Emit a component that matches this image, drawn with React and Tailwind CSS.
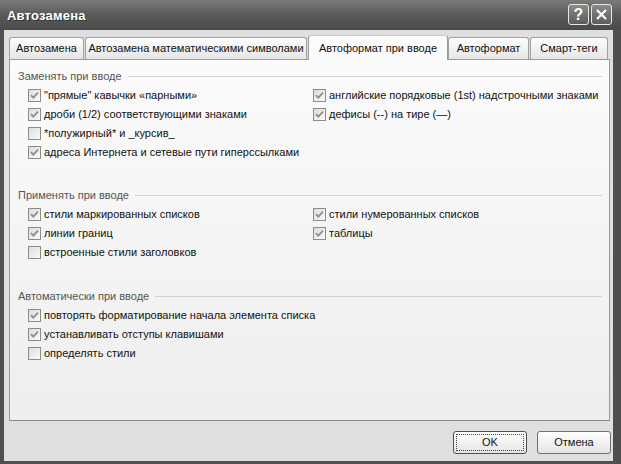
import React from 'react'

const groups = [
  {
    title: 'Заменять при вводе',
    gap: '',
    items: [
      ['"прямые" кавычки «парными»', true],
      ['английские порядковые (1st) надстрочными знаками', true],
      ['дроби (1/2) соответствующими знаками', true],
      ['дефисы (--) на тире (—)', true],
      ['*полужирный* и _курсив_', false],
      null,
      ['адреса Интернета и сетевые пути гиперссылками', true],
    ],
  },
  {
    title: 'Применять при вводе',
    gap: 'mt-[24px]',
    items: [
      ['стили маркированных списков', true],
      ['стили нумерованных списков', true],
      ['линии границ', true],
      ['таблицы', true],
      ['встроенные стили заголовков', false],
    ],
  },
  {
    title: 'Автоматически при вводе',
    gap: 'mt-[25px]',
    items: [
      ['повторять форматирование начала элемента списка', true],
      null,
      ['устанавливать отступы клавишами', true],
      null,
      ['определять стили', false],
    ],
  },
]

function Checkbox({ checked }) {
  return (
    <span className="w-[13px] h-[13px] shrink-0 border border-[#8c8c8c] bg-gradient-to-br from-[#dcdcdc] to-[#fbfbfb] flex items-center justify-center">
      {checked && (
        <svg width="9" height="9" viewBox="0 0 9 9">
          <path d="M1 4.2 L3.3 6.6 L8 1.6" fill="none" stroke="#8e8e8e" strokeWidth="1.8" />
        </svg>
      )}
    </span>
  )
}

function Group({ title, items, gap }) {
  return (
    <div className={gap}>
      <div className="h-[19px] flex items-center pl-[8px] pr-[7px]">
        <span className="text-[#555] pr-[6px]">{title}</span>
        <span className="flex-1 h-px bg-[#d2d2d2]" />
      </div>
      <div className="grid grid-cols-[285px_1fr] pl-[18px]">
        {items.map((it, i) =>
          it ? (
            <label key={i} className="h-[19px] flex items-center gap-[3px] whitespace-nowrap">
              <Checkbox checked={it[1]} />
              <span className="text-[#111]">{it[0]}</span>
            </label>
          ) : (
            <div key={i} className="h-[19px]" />
          )
        )}
      </div>
    </div>
  )
}

const tabCls =
  'h-[22px] flex items-center justify-center whitespace-nowrap border border-b-0 border-[#a0a0a0] rounded-t-[3px] bg-gradient-to-b from-[#fdfdfd] to-[#e6e6e6] text-[#111]'

export default function App() {
  return (
    <div className="w-[621px] h-[464px] flex flex-col bg-[#4f4f4f] font-['Liberation_Sans',Arial,sans-serif] text-[11px] leading-none">
      {/* title bar */}
      <div className="h-[30px] shrink-0 flex items-center pl-[7px] pr-[9px] bg-gradient-to-b from-[#7a7a7a] via-[#5a5a5a] to-[#4a4a4a]">
        <span className="flex-1 text-white font-bold text-[13px] tracking-[0.2px] [text-shadow:1px_1px_0_#333]">
          Автозамена
        </span>
        <div className="flex gap-[2px] mt-[-1px]">
          <span className="w-[21px] h-[21px] rounded-[3px] border border-[#e8e8e8] bg-gradient-to-b from-[#8a8a8a] to-[#5c5c5c] flex items-center justify-center text-white font-bold text-[16px]">
            ?
          </span>
          <span className="w-[21px] h-[21px] rounded-[3px] border border-[#e8e8e8] bg-gradient-to-b from-[#8a8a8a] to-[#5c5c5c] flex items-center justify-center">
            <svg width="13" height="13" viewBox="0 0 13 13">
              <path d="M2 2 L11 11 M11 2 L2 11" stroke="white" strokeWidth="2.2" />
            </svg>
          </span>
        </div>
      </div>

      {/* body */}
      <div className="flex-1 flex flex-col ml-[4px] mr-[8px] mb-[3px] bg-[#dfdfdf]">
        {/* tabs */}
        <div className="h-[29px] flex items-end pl-[5px]">
          <div className={`${tabCls} w-[75px]`}>Автозамена</div>
          <div className={`${tabCls} w-[222px] ml-[1px]`}>Автозамена математическими символами</div>
          <div className="relative z-10 w-[140px] h-[25px] mb-[-1px] ml-[1px] flex items-center justify-center whitespace-nowrap border border-b-0 border-[#9a9a9a] border-t-[#c8c8c8] rounded-t-[3px] bg-[#fbfbfb] text-[#111]">
            Автоформат при вводе
          </div>
          <div className={`${tabCls} w-[81px]`}>Автоформат</div>
          <div className={`${tabCls} w-[78px] ml-[1px]`}>Смарт-теги</div>
        </div>

        {/* panel */}
        <div className="h-[362px] ml-[5px] mr-[3px] border border-[#9a9a9a] border-b-[#8a8a8a] bg-gradient-to-b from-[#fbfbfb] to-[#eeeeee] pt-[7px]">
          {groups.map((g) => (
            <Group key={g.title} {...g} />
          ))}
        </div>

        {/* buttons */}
        <div className="flex justify-end gap-[10px] mt-[10px] mr-[2px]">
          <button className="w-[74px] h-[23px] rounded-[3px] border border-[#505050] bg-gradient-to-b from-[#ffffff] to-[#e4e4e4] p-[2px]">
            <span className="w-full h-full flex items-center justify-center border border-dotted border-[#444] text-[#111]">
              OK
            </span>
          </button>
          <button className="w-[74px] h-[23px] rounded-[3px] border border-[#707070] bg-gradient-to-b from-[#ffffff] to-[#e4e4e4] flex items-center justify-center text-[#111]">
            Отмена
          </button>
        </div>
      </div>
    </div>
  )
}
